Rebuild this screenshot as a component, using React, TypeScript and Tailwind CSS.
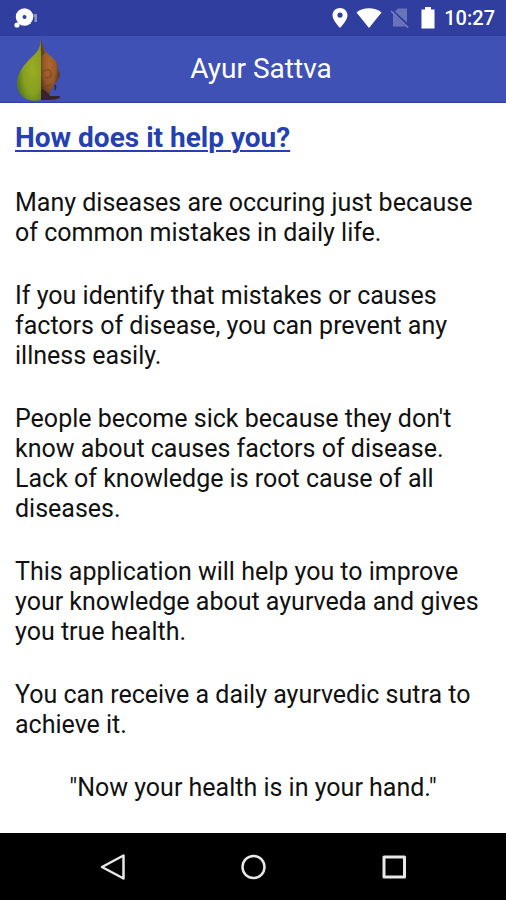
const PARAGRAPHS = [
  "Many diseases are occuring just because of common mistakes in daily life.",
  "If you identify that mistakes or causes factors of disease, you can prevent any illness easily.",
  "People become sick because they don't know about causes factors of disease. Lack of knowledge is root cause of all diseases.",
  "This application will help you to improve your knowledge about ayurveda and gives you true health.",
  "You can receive a daily ayurvedic sutra to achieve it.",
];

function StatusBar() {
  return (
    <div className="flex h-9 items-center justify-between bg-[#303f9f] pr-[11px] pl-3.5 text-white">
      <svg width="24" height="20" viewBox="0 0 24 20" aria-hidden="true">
        <circle cx="10.500" cy="9" r="8.700" fill="currentColor" />
        <circle cx="3" cy="17" r="2.600" fill="currentColor" />
        <circle cx="10.500" cy="9" r="2" fill="#303f9f" />
        <path d="M19.500 6h3.500v8h-2.500v-5h-1z" fill="#c5cae9" opacity=".6" />
      </svg>
      <div className="flex items-center">
        <svg width="16" height="20" viewBox="0 0 16 20" aria-hidden="true">
          <path
            d="M8 0C3.800 0 .5 3.200.5 7.300.5 12.500 8 20 8 20s7.500-7.500 7.500-12.700C15.500 3.200 12.200 0 8 0zm0 9.700a2.600 2.600 0 1 1 0-5.200A2.600 2.600 0 0 1 8 9.700z"
            fill="currentColor"
          />
        </svg>
        <svg className="ml-2" width="26" height="20" viewBox="0 0 26 20" aria-hidden="true">
          <path d="M13 20 .5 4.500C4 1.700 8.300.3 13 .3s9 1.400 12.500 4.200z" fill="currentColor" />
        </svg>
        <svg className="ml-2" width="20" height="20" viewBox="0 0 20 20" aria-hidden="true">
          <path d="M8 .5h9v14L5 3.500zM3 6l12.500 12.500H3z" fill="#6974bb" />
          <path d="m1 3 17 16.500" stroke="#7983c4" strokeWidth="1.600" />
        </svg>
        <svg className="ml-2.5" width="16" height="22" viewBox="0 0 16 22" aria-hidden="true">
          <path d="M5 0h6v2.500h3.500v19h-13v-19H5z" fill="currentColor" />
        </svg>
        <span className="ml-2 text-[20px] leading-6 font-medium">10:27</span>
      </div>
    </div>
  );
}

function FigLogo() {
  return (
    <svg className="h-16 w-12" viewBox="0 0 48 64" aria-hidden="true">
      <defs>
        <radialGradient id="green" cx=".65" cy=".5" r=".65">
          <stop offset="0" stopColor="#9dab22" />
          <stop offset=".6" stopColor="#86a020" />
          <stop offset="1" stopColor="#557a1c" />
        </radialGradient>
        <radialGradient id="brown" cx=".45" cy=".45" r=".55">
          <stop offset="0" stopColor="#ad682c" />
          <stop offset=".6" stopColor="#955829" />
          <stop offset="1" stopColor="#583322" />
        </radialGradient>
      </defs>
      <path
        d="M27 1c-.5 6-1.500 11-5 15C14 24 3 33 3 46c0 9 5 15 12 17 4 1 8 1 12 0z"
        fill="url(#green)"
      />
      <path
        d="M27 1c1 6 2 11 6 15 5 4 9 7 11 12v5c1 2 2 3 2 5s-2 3-2 5c-1 2-2 3-4 4l-1 4-3 3v5l-3 2h-6z"
        fill="url(#brown)"
      />
      <path d="M27 1c.3 6 1 10 4 14.500L27 19z" fill="#694020" />
      <path
        d="M28 37c2-5 8-6 9-1 1 4-3 6-6 4m-3 8c3 2 6 2 9-1"
        fill="none"
        stroke="#7a4523"
        strokeWidth="1.100"
      />
      <path d="M27 52c4 1 7 4 9 7h9.500l.5 2c-5 2-12 2-19 2z" fill="#38212a" />
      <path d="M41 48c1 2 1 3 0 5" fill="none" stroke="#3a2638" strokeWidth="1.800" />
    </svg>
  );
}

function AppHeader() {
  return (
    <header className="flex h-[67px] items-center border-b border-[#303f9f] bg-[#3f51b5] px-3.5">
      <FigLogo />
      <h1 className="flex-1 pr-8 pl-[0px] text-center text-[28px] leading-8 text-white">Ayur Sattva</h1>
    </header>
  );
}

function NavigationBar() {
  return (
    <nav className="flex h-[67px] items-center justify-around bg-black px-[43px] text-[#e8e8e8]">
      <button type="button" aria-label="Back">
        <svg width="28" height="28" viewBox="0 0 28 28" fill="none" stroke="currentColor" strokeWidth="2.500" strokeLinejoin="round">
          <path d="M24.500 2.500v23L3 14z" />
        </svg>
      </button>
      <button type="button" aria-label="Home">
        <svg width="28" height="28" viewBox="0 0 28 28" fill="none" stroke="currentColor" strokeWidth="2.500">
          <circle cx="14.500" cy="14" r="11" />
        </svg>
      </button>
      <button type="button" aria-label="Recent apps">
        <svg width="28" height="28" viewBox="0 0 28 28" fill="none" stroke="currentColor" strokeWidth="3" strokeLinejoin="round">
          <path d="M5 4h20.500v20H5z" />
        </svg>
      </button>
    </nav>
  );
}

export default function App() {
  return (
    <div className="flex min-h-screen flex-col bg-white font-['Roboto',sans-serif]">
      <StatusBar />
      <AppHeader />
      <main className="flex-1 px-[15px] pt-5 text-[25px] leading-[30px] text-[#111]">
        <h2 className="mb-[35px] text-[28px] font-bold text-[#2540b0] underline decoration-2 underline-offset-3">
          How does it help you?
        </h2>
        <div className="flex flex-col gap-[33px]">
          {PARAGRAPHS.map((text) => (
            <p key={text}>{text}</p>
          ))}
          <p className="text-center">"Now your health is in your hand."</p>
        </div>
      </main>
      <NavigationBar />
    </div>
  );
}
